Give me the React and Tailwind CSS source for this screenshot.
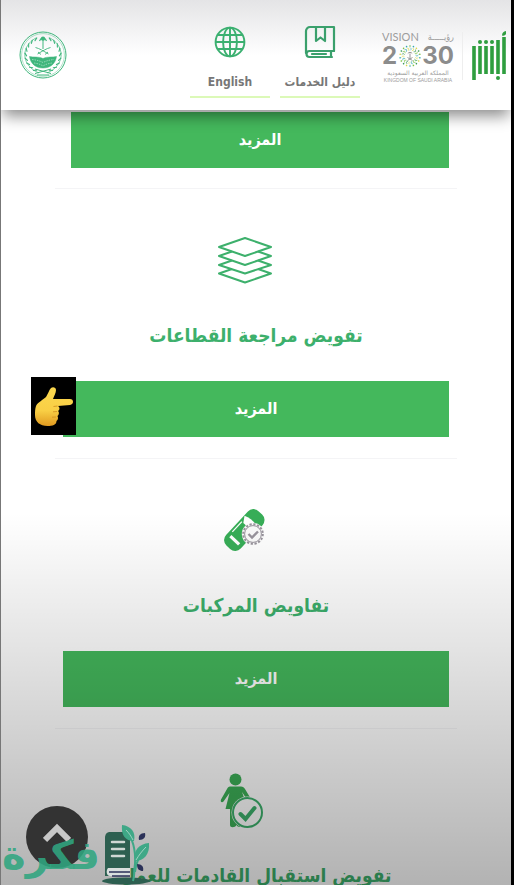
import React from 'react';

const services = [
  { title: 'تفويض مراجعة القطاعات', icon: <LayersIcon />, pointer: true },
  { title: 'تفاويض المركبات', icon: <VehicleIcon /> },
  { title: 'تفويض استقبال القادمات للعمل', icon: <WorkerIcon /> },
];

function Emblem() {
  const leaves = [20, 36, 52, 68, 84, 100, 116, 132, 148];
  return (
    <svg viewBox="0 0 48 48" className="mt-[7px] h-12 w-12" fill="none" stroke="#3fb67c">
      <circle cx="24" cy="24" r="23" strokeWidth="1" />
      <circle cx="24" cy="24" r="21.4" strokeWidth="0.4" />
      {/* wreath */}
      <path d="M17 7C7 12 3 23 8 32c3 5 7 8 12 10M31 7c10 5 14 16 9 25-3 5-7 8-12 10" strokeWidth="0.7" />
      {leaves.map((a) => (
        <g key={a} strokeWidth="1.1" strokeLinecap="round">
          <path d="M24 5.8l-2.6 2" transform={`rotate(${-a} 24 24)`} />
          <path d="M24 5.8l2.6 2" transform={`rotate(${a} 24 24)`} />
        </g>
      ))}
      {/* palm */}
      <path d="M24 8v10" strokeWidth="1" />
      <circle cx="24" cy="7.6" r="2.2" fill="#3fb67c" stroke="none" />
      <path d="M20.5 10c1-2.300 2.300-2.800 3.500-2.400 1.200-.4 2.500.1 3.500 2.400" strokeWidth="1.2" />
      {/* swords */}
      <path d="M16.5 16.5c4 1 8 3.500 13 6.500M31.5 16.500c-4 1-8 3.500-13 6.500M19 21l3 2.500M29 21l-3 2.500" strokeWidth="0.9" />
      {/* crowd */}
      <path d="M10.5 25.500c4 1 9-.2 13.500 2 4.500-2.200 9.500-1 13.500-2-1 7-6 11.500-13.500 11.500S11.500 32.500 10.500 25.500z" fill="#3fb67c" strokeWidth="0.5" />
      <path d="M13 28.500c4 .5 7 1 11 3 4-2 7-2.500 11-3M15 32c3 .5 6 1 9 3 3-2 6-2.500 9-3" stroke="#a8e0c4" strokeWidth="0.8" strokeDasharray="1.5 1" />
      <path d="M16 38l16 4.500M32 38l-16 4.500M18 44h12" strokeWidth="1" />
    </svg>
  );
}

function GlobeIcon() {
  return (
    <svg viewBox="0 0 30 30" className="h-8 w-8" fill="none" stroke="#3bb070" strokeWidth="1.8">
      <circle cx="15" cy="15" r="13.5" />
      <ellipse cx="15" cy="15" rx="6.5" ry="13.5" />
      <path d="M15 1.500v27M1.500 15h27M3.500 8.500h23M3.500 21.500h23" />
    </svg>
  );
}

function BookIcon() {
  return (
    <svg viewBox="0 0 32 34" className="h-9 w-8" fill="none" stroke="#3aa06c" strokeWidth="2.2" strokeLinejoin="round" strokeLinecap="round">
      <path d="M30 26V2H6a4 4 0 0 0-4 4v22" />
      <path d="M30 26H5.500a3 3 0 0 0 0 6H28M27 26v6M8 29h14" />
      <path d="M12 2.500v13.500l4.500-3.500 4.500 3.500V2.500" />
    </svg>
  );
}

function VisionLogo() {
  const dots = [...Array(18).keys()];
  const colors = ['#7cc242', '#35a8b4', '#d9d94a', '#3c9a5a'];
  return (
    <div className="mt-[6px] flex w-[72px] flex-col text-[#9c9c9c]">
      <div className="flex items-center justify-between font-[Lato,sans-serif] text-[11px] leading-[14px]">
        <span>VISION</span>
        <span className="font-['DejaVu_Sans_Condensed','DejaVu_Sans',sans-serif] text-[9px] leading-[14px]">رؤيـــــة</span>
      </div>
      <div className="flex h-6 items-center justify-between font-['Inter',sans-serif] text-[24px] leading-6 font-bold text-[#8c8c8c]">
        <span>2</span>
        <svg viewBox="0 0 24 24" className="h-6 w-6" fill="none">
          {dots.map((i) => (
            <g key={i} transform={`rotate(${i * 20} 12 12)`}>
              <circle cx="12" cy="2" r="0.8" fill={colors[i % 4]} />
              <path d="M12 3.500l1.500 1.500-1.500 1.500" stroke={colors[(i + 1) % 4]} strokeWidth="0.6" />
            </g>
          ))}
          <path d="M12 9.500v5M9.800 9.500c1-1.500 3.400-1.500 4.400 0M9.500 13.500l5 3M14.500 13.500l-5 3" stroke="#8c8c8c" strokeWidth="0.9" />
        </svg>
        <span>30</span>
      </div>
      <span dir="rtl" className="text-center font-['DejaVu_Sans',sans-serif] text-[6px] leading-[9px] whitespace-nowrap">المملكة العربية السعودية</span>
      <span className="text-center font-['Liberation_Sans',sans-serif] text-[5px] leading-[6px] whitespace-nowrap">KINGDOM OF SAUDI ARABIA</span>
    </div>
  );
}

function AbsherLogo() {
  return (
    <svg viewBox="0 0 36 50" className="mt-[7px] h-[50px] w-9" fill="none" stroke="#2f9e3f" strokeWidth="3.6" role="img" aria-label="أبشر">
      <path d="M3 15v34M9 15v28M15 15v28M21 15v28M27 9v34M33 6v37" />
      <g fill="#2f9e3f" stroke="none">
        <circle cx="9" cy="11" r="2" />
        <circle cx="15" cy="11" r="2" />
        <circle cx="21" cy="11" r="2" />
        <circle cx="27" cy="47" r="2" />
        <path d="M31 4.500c0-2.500 1.500-4 4-4.500v3c-1 1.500-2 2-4 1.500z" />
      </g>
    </svg>
  );
}

function LayersIcon() {
  return (
    <svg viewBox="0 0 56 56" className="h-14 w-14" fill="none" stroke="#3db06c" strokeWidth="2" strokeLinejoin="round">
      <path d="M28 5L54 14 28 23 2 14z" />
      <path d="M15 18.500L2 23l26 9 26-9-13-4.500" />
      <path d="M15 27.500L2 32l26 8.500L54 32l-13-4.500" />
      <path d="M15 36L2 40.500 28 49.500l26-9L41 36" />
    </svg>
  );
}

function VehicleIcon() {
  return (
    <svg viewBox="0 0 56 56" className="h-14 w-14" fill="none">
      <g transform="rotate(43 28 27)">
        <rect x="17.500" y="4" width="20" height="47" rx="7.5" fill="#37ad57" />
        <path d="M18 17c6-2.500 13-2.500 19.500 0l-3 6H22z" fill="#fff" />
        <path d="M20 23v14" stroke="#fff" strokeWidth="1.3" />
        <path d="M21.500 41.500h12" stroke="#fff" strokeWidth="3.2" />
      </g>
      <circle cx="36" cy="31" r="11.2" fill="#fafafa" />
      <circle cx="36" cy="31" r="9.8" stroke="#98939c" strokeWidth="2" strokeDasharray="2.2 1.65" />
      <circle cx="36" cy="31" r="8.4" stroke="#98939c" strokeWidth="1" />
      <path d="M31.500 31l3.500 3.500 6-6" stroke="#98939c" strokeWidth="2.4" />
    </svg>
  );
}

function WorkerIcon() {
  return (
    <svg viewBox="0 0 56 56" className="h-14 w-14" fill="none">
      <g fill="#3daf57">
        <circle cx="18.500" cy="6.500" r="6" />
        <path d="M13 13.500h11c2 0 3 1 4 2.500l6 10-3 2-6-9 6 17H8.500l4-16-6 8.500c-1.500 1.500-3.500.5-2.500-2l6-10.500c.8-1.500 1.500-2.500 3-2.500z" />
        <path d="M13 34h12v18c0 2.500-4.500 2.500-5.500 0-1.500 3-6.500 3-6.500 0z" />
      </g>
      <circle cx="30.500" cy="39.500" r="16" fill="#fff" />
      <circle cx="30.500" cy="39.500" r="14.5" stroke="#3db06c" strokeWidth="2" fill="#fff" />
      <path d="M23.500 41l5 5L37.500 35" stroke="#3db06c" strokeWidth="4" strokeLinecap="round" />
    </svg>
  );
}

function PointingHand() {
  return (
    <div className="absolute -top-1 -left-8 flex h-[58px] w-[45px] items-center justify-center bg-black">
      <svg viewBox="0 0 40 42" className="h-[42px] w-10">
        <defs>
          <linearGradient id="skin" x1="0" y1="0" x2="0" y2="1">
            <stop offset="0" stopColor="#fbd84f" />
            <stop offset="0.6" stopColor="#f9cf45" />
            <stop offset="1" stopColor="#e09a20" />
          </linearGradient>
        </defs>
        <path fill="url(#skin)" d="M2 21c2-4 7-6 10-9 2-3 3-7 5-9 2-1.500 5-.5 5 2 0 3-2 6-3 9h17c4 0 4 5.500 0 6l-12 1c2 1 2 4 0 5 1.500 1 1 4-.500 5 1 2 .5 4-1 5 0 4-4 5-9 5C6 41 1 37 1 30c0-3 0-6 1-9z" />
        <path d="M23.500 21l-4 .5M23 26.500l-4 .3M22 32l-4 .2" stroke="#d99a25" strokeWidth="1" />
      </svg>
    </div>
  );
}

function NavLink({ label, children }) {
  return (
    <a href="#" className="flex w-20 flex-col items-center border-b-2 border-[#dcf9b8] text-xs font-bold text-[#777]">
      <span className="flex h-9 items-center">{children}</span>
      <span className="mt-3 h-6 leading-5 whitespace-nowrap">{label}</span>
    </a>
  );
}

function MoreButton() {
  return (
    <button className="h-14 w-full bg-[#44b85c] text-base font-bold text-white">المزيد</button>
  );
}

function ServiceCard({ title, icon, pointer }) {
  return (
    <section className="mx-[54px] border-b border-[#f4f4f6] px-2 pt-11 pb-[21px]">
      <div className="flex justify-center pr-[22px]">{icon}</div>
      <h2 className="my-[30px] text-center text-[19px] leading-8 font-bold whitespace-nowrap text-[#3db06c]">{title}</h2>
      <div className="relative">
        <MoreButton />
        {pointer && <PointingHand />}
      </div>
    </section>
  );
}

function Watermark() {
  return (
    <div className="absolute bottom-0 left-0 flex items-end">
      <span className="w-[100px] text-center font-['DejaVu_Sans',sans-serif] text-[40px] leading-[60px] font-bold text-[#30a680]/90">فكرة</span>
      <svg viewBox="0 0 50 60" className="h-[60px] w-[50px]">
        <ellipse cx="25" cy="56" rx="24" ry="3.5" fill="#2d5f50" />
        <path d="M9 7h20v44H4V13c0-4 2-6 5-6z" fill="#2d5f50" />
        <path d="M7 43h22v8H9c-4 0-4-6-2-8z" fill="#d9dfdd" />
        <path d="M8 47h21M11 51h18" stroke="#2b3158" strokeWidth="1.5" />
        <path d="M11 17h12M11 24h12M11 31h12" stroke="#cfd8d4" strokeWidth="2.5" strokeLinecap="round" />
        <path d="M21 0c9 1 14 7 12 16-9 0-13-6-12-16z" fill="#3fa887" />
        <path d="M48 18c-10 1-16 7-14 18 9 0 15-7 14-18z" fill="#3fa887" />
        <path d="M24 5c6 6 11 16 10 34-1 6 0 11-2 17M45 22c-5 6-10 13-11 25" stroke="#3fa887" strokeWidth="2" fill="none" />
        <path d="M25 5c3 3 5 6 7 10M45 22c-4 4-7 8-10 13" stroke="#b9ddd0" strokeWidth="0.8" fill="none" />
        <path d="M44 8c-5 0-7 3-6 7 5 0 7-3 6-7zM36 39c0 5 2 7 6 7 1-4-1-7-6-7z" fill="#2b3158" />
      </svg>
    </div>
  );
}

export default function App() {
  return (
    <div className="relative h-screen overflow-hidden border-r-[3px] border-l border-r-black border-l-[#777] bg-white font-['DejaVu_Sans_Condensed','DejaVu_Sans',sans-serif]">
      <header className="relative z-10 flex items-start justify-between bg-linear-to-b from-[#e4e4e6] via-white to-white pt-6 pr-1 pb-3 pl-[18px] shadow-[0_8px_14px_-2px_rgba(0,0,0,0.45)]">
        <Emblem />
        <div className="flex items-start">
          <nav className="mr-[22px] flex gap-[10px]">
            <NavLink label="English"><GlobeIcon /></NavLink>
            <NavLink label="دليل الخدمات"><BookIcon /></NavLink>
          </nav>
          <VisionLogo />
          <div className="mx-2 mt-2 h-12 border-l border-[#eee]" />
          <AbsherLogo />
        </div>
      </header>

      <main dir="rtl">
        <section className="mx-[54px] border-b border-[#f4f4f6] pt-[2px] pr-2 pb-5 pl-4">
          <MoreButton />
        </section>
        {services.map((s) => (
          <ServiceCard key={s.title} {...s} />
        ))}
      </main>

      {/* bottom shade */}
      <div className="pointer-events-none absolute inset-x-0 bottom-0 h-[42%] bg-linear-to-b from-black/0 to-black/30" />

      <button aria-label="Back to top" className="absolute bottom-[17px] left-[25px] flex h-[62px] w-[62px] items-center justify-center rounded-full bg-[#333] pb-2">
        <svg viewBox="0 0 28 20" className="h-5 w-7" fill="none" stroke="#c8c8c8" strokeWidth="6">
          <path d="M2 17L14 5l12 12" />
        </svg>
      </button>
      <Watermark />
    </div>
  );
}
